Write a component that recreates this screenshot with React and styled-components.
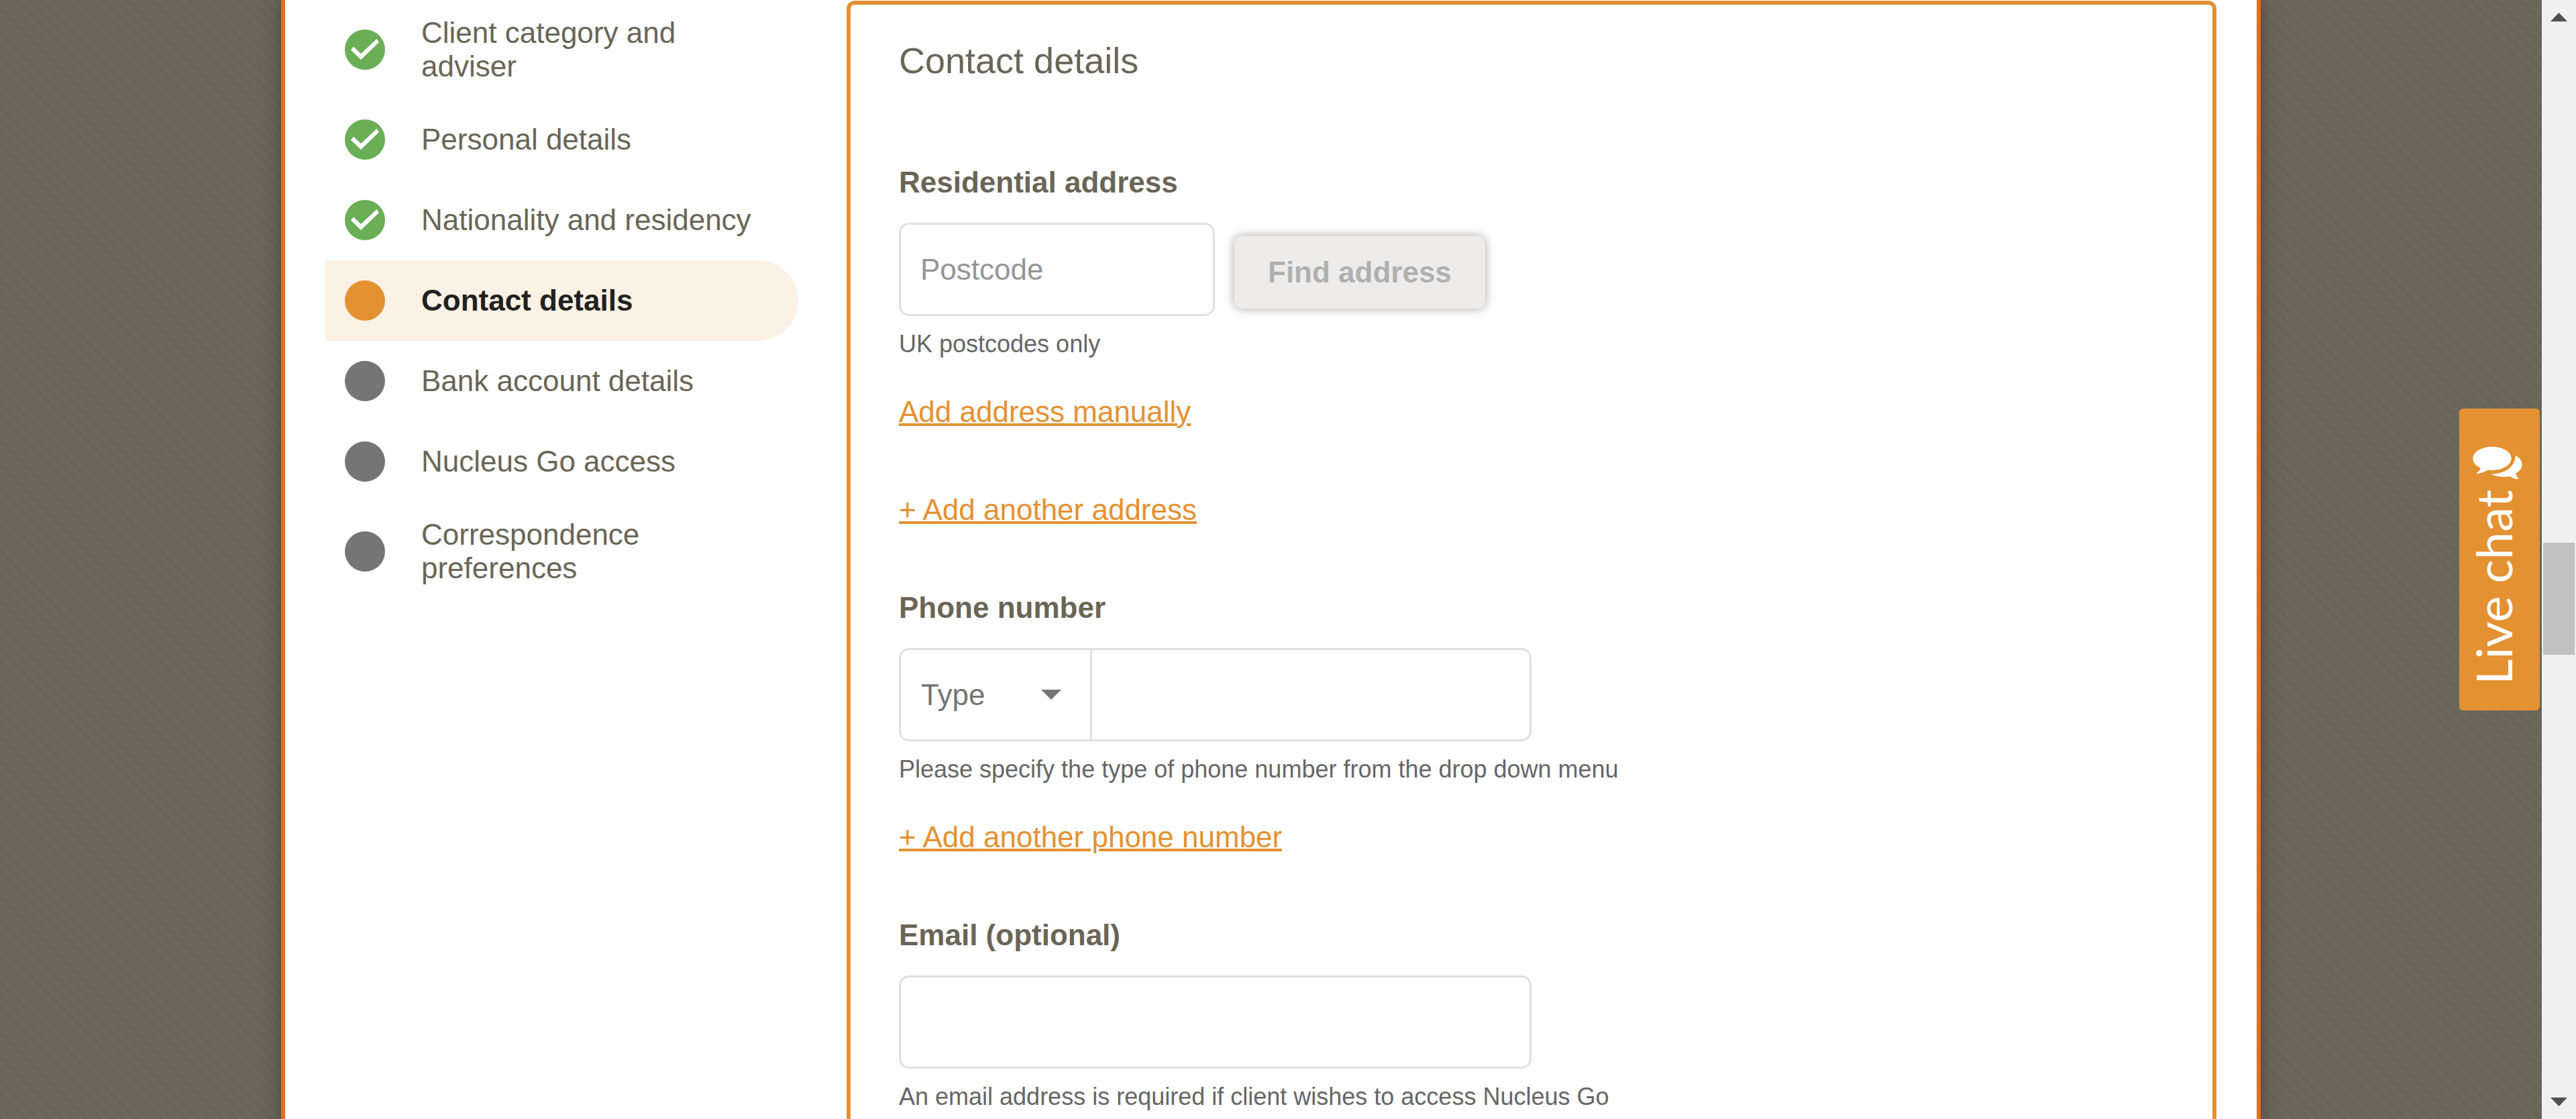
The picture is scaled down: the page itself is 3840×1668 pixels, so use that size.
import React from "react";
import styled, { createGlobalStyle, css } from "styled-components";

const colors = {
  text: "#6a6556",
  strong: "#21211f",
  orange: "#e49132",
  frame: "#e86c1f",
  tint: "#fbf1e4",
  green: "#6aae55",
  grey: "#757575",
  hint: "#666666",
  line: "#e0e0e0",
};

const GlobalStyle = createGlobalStyle`
  *, *::before, *::after { box-sizing: border-box; }
  body {
    margin: 0;
    overflow: hidden;
    font-family: "Liberation Sans", Arial, Helvetica, sans-serif;
    font-size: 44px;
    line-height: 50px;
    color: ${colors.text};
  }
  button, input, select { font: inherit; }
`;

const Screen = styled.div`
  display: flex;
  height: 100vh;
`;

const Viewport = styled.div`
  position: relative;
  flex: 1;
  min-width: 0;
  display: flex;
  justify-content: center;
  align-items: flex-start;
  padding: 0 419px;
  overflow: hidden;
  background: repeating-linear-gradient(
    45deg,
    #676458 0,
    #676458 2px,
    #6c685c 6px,
    #6c685c 9px,
    #676458 13px
  );
`;

const Page = styled.div`
  flex: 1;
  min-width: 0;
  display: flex;
  align-items: flex-start;
  gap: 72px;
  min-height: 100%;
  padding: 0 60px;
  background: #fff;
  border: solid ${colors.frame};
  border-width: 0 6px;
  box-shadow: 0 0 24px rgba(50, 55, 40, 0.6);
`;

const Steps = styled.ol`
  flex: none;
  width: 705px;
  margin: 0;
  padding: 0;
  list-style: none;
`;

const Step = styled.li`
  display: flex;
  align-items: center;
  gap: 54px;
  min-height: 120px;
  padding: 24px 60px 24px 29px;
  border-radius: 0 60px 60px 0;
  ${(p) =>
    p.$current &&
    css`
      background: ${colors.tint};
      color: ${colors.strong};
      font-weight: bold;
    `}
`;

const dotColor = { done: colors.green, current: colors.orange, todo: colors.grey };

const Dot = styled.span`
  flex: none;
  display: grid;
  place-items: center;
  width: 60px;
  height: 60px;
  border-radius: 50%;
  background: ${(p) => dotColor[p.$state]};
`;

const Card = styled.form`
  flex: 1;
  min-width: 0;
  margin-top: 1px;
  padding: 52px 72px 72px;
  border: 6px solid ${colors.orange};
  border-radius: 12px;
`;

const Title = styled.h2`
  margin: 0 0 126px;
  font-size: 54px;
  line-height: 62px;
  font-weight: normal;
`;

const FieldSet = styled.div`
  display: flex;
  flex-direction: column;
  align-items: flex-start;
  margin-bottom: 96px;
`;

const Label = styled.label`
  margin-bottom: 35px;
  font-weight: bold;
`;

const fieldBox = css`
  height: 139px;
  border: 3px solid ${colors.line};
  border-radius: 15px;
  background: #fff;
`;

const TextInput = styled.input`
  ${fieldBox}
  width: ${(p) => p.$width}px;
  padding: 0 29px;
  color: ${colors.text};
  &::placeholder {
    color: #959595;
    opacity: 1;
  }
`;

const InputRow = styled.div`
  display: flex;
  gap: 29px;
`;

const FindButton = styled.button`
  height: 108px;
  margin-top: 20px;
  padding: 0 50px;
  border: 0;
  border-radius: 12px;
  background: #eeecea;
  box-shadow: 0 0 15px rgba(0, 0, 0, 0.35);
  color: #b0b0ae;
  font-weight: bold;
`;

const PhoneBox = styled.div`
  ${fieldBox}
  display: flex;
  width: 943px;
  overflow: hidden;
`;

const SelectWrap = styled.div`
  flex: none;
  display: grid;
  align-items: center;
  width: 285px;
  border-right: 3px solid ${colors.line};
  & > * {
    grid-area: 1 / 1;
  }
`;

const TypeSelect = styled.select`
  width: 100%;
  height: 100%;
  padding: 0 0 0 30px;
  border: 0;
  appearance: none;
  background: transparent;
  color: ${colors.grey};
`;

const Caret = styled.svg`
  justify-self: end;
  margin-right: 43px;
  pointer-events: none;
`;

const PhoneInput = styled.input`
  flex: 1;
  min-width: 0;
  padding: 0 29px;
  border: 0;
  background: transparent;
  color: ${colors.text};
`;

const Hint = styled.p`
  margin: 21px 0 0;
  font-size: 36px;
  line-height: 42px;
  color: ${colors.hint};
`;

const ActionLink = styled.a`
  margin-top: ${(p) => (p.$spaced ? 96 : 55)}px;
  color: ${colors.orange};
  text-decoration-line: underline;
  text-decoration-thickness: 4px;
`;

const ChatButton = styled.button`
  position: absolute;
  right: 3px;
  top: 50%;
  transform: translateY(-50%);
  display: flex;
  flex-direction: column;
  align-items: center;
  gap: 14px;
  width: 120px;
  height: 450px;
  padding: 57px 6px 0 0;
  border: 0;
  border-radius: 6px;
  background: ${colors.orange};
  color: #fff;
`;

const ChatLabel = styled.span`
  margin-right: 12px;
  writing-mode: vertical-rl;
  transform: rotate(180deg);
  font-family: Lato, "Liberation Sans", sans-serif;
  font-size: 74px;
  line-height: 80px;
`;

const ScrollBar = styled.div`
  flex: none;
  display: flex;
  flex-direction: column;
  width: 51px;
  background: #f0f0f0;
`;

const ScrollArrow = styled.button`
  flex: none;
  display: grid;
  place-items: center;
  height: 51px;
  padding: 0;
  border: 0;
  background: transparent;
`;

const ScrollTrack = styled.div`
  flex: 1;
  display: flex;
  flex-direction: column;
  padding: 0 2px;
`;

const ScrollSpace = styled.div`
  flex: ${(p) => p.$share};
`;

const ScrollThumb = styled.div`
  flex: none;
  height: 167px;
  background: #c1c1c1;
`;

const steps = [
  { name: "Client category and adviser", state: "done" },
  { name: "Personal details", state: "done" },
  { name: "Nationality and residency", state: "done" },
  { name: "Contact details", state: "current" },
  { name: "Bank account details", state: "todo" },
  { name: "Nucleus Go access", state: "todo" },
  { name: "Correspondence preferences", state: "todo" },
];

const Tick = () => (
  <svg width="42" height="32" viewBox="0 0 42 32" aria-hidden="true">
    <path d="M4 11.5L15 22L38.5 0L42 5L15 31L0 16.5Z" fill="#fff" />
  </svg>
);

const Bubbles = () => (
  <svg width="74" height="50" viewBox="20 33 222 150" fill="#fff" aria-hidden="true">
    <path d="M107 33C155 33 193 56 193 85S155 138 107 138Q98 138 90 136Q68 150 40 153Q36 151 40 148Q54 140 55 127C33 118 21 103 21 85C21 56 59 33 107 33Z" />
    <path d="M211 73C231 82 241 97 241 112C241 130 230 143 212 151Q214 164 224 174Q226 178 220 178Q200 175 186 166C155 169 122 166 102 155C165 155 211 122 211 73Z" />
  </svg>
);

const Arrow = ({ up }) => (
  <svg width="25" height="13" viewBox="0 0 25 13" fill="#505050" aria-hidden="true">
    <path d={up ? "M0 13L12.5 0L25 13Z" : "M0 0H25L12.5 13Z"} />
  </svg>
);

export default function App() {
  return (
    <Screen>
      <GlobalStyle />
      <Viewport>
        <Page>
          <Steps>
            {steps.map((step) => (
              <Step
                key={step.name}
                $current={step.state === "current"}
                aria-current={step.state === "current" ? "step" : undefined}
              >
                <Dot $state={step.state}>{step.state === "done" && <Tick />}</Dot>
                <span>{step.name}</span>
              </Step>
            ))}
          </Steps>

          <Card onSubmit={(e) => e.preventDefault()}>
            <Title>Contact details</Title>

            <FieldSet>
              <Label htmlFor="postcode">Residential address</Label>
              <InputRow>
                <TextInput id="postcode" $width={471} placeholder="Postcode" />
                <FindButton type="button" disabled>
                  Find address
                </FindButton>
              </InputRow>
              <Hint>UK postcodes only</Hint>
              <ActionLink href="#manual">Add address manually</ActionLink>
              <ActionLink href="#address" $spaced>
                + Add another address
              </ActionLink>
            </FieldSet>

            <FieldSet>
              <Label htmlFor="phone">Phone number</Label>
              <PhoneBox>
                <SelectWrap>
                  <TypeSelect aria-label="Phone number type" defaultValue="">
                    <option value="">Type</option>
                  </TypeSelect>
                  <Caret width="30" height="15" viewBox="0 0 30 15" aria-hidden="true">
                    <path d="M0 0H30L15 15Z" fill={colors.grey} />
                  </Caret>
                </SelectWrap>
                <PhoneInput id="phone" type="tel" />
              </PhoneBox>
              <Hint>Please specify the type of phone number from the drop down menu</Hint>
              <ActionLink href="#phone">+ Add another phone number</ActionLink>
            </FieldSet>

            <FieldSet>
              <Label htmlFor="email">Email (optional)</Label>
              <TextInput id="email" type="email" $width={943} />
              <Hint>An email address is required if client wishes to access Nucleus Go</Hint>
            </FieldSet>
          </Card>
        </Page>

        <ChatButton type="button">
          <Bubbles />
          <ChatLabel>Live chat</ChatLabel>
        </ChatButton>
      </Viewport>

      <ScrollBar>
        <ScrollArrow type="button" aria-label="Scroll up">
          <Arrow up />
        </ScrollArrow>
        <ScrollTrack>
          <ScrollSpace $share={758} />
          <ScrollThumb />
          <ScrollSpace $share={641} />
        </ScrollTrack>
        <ScrollArrow type="button" aria-label="Scroll down">
          <Arrow />
        </ScrollArrow>
      </ScrollBar>
    </Screen>
  );
}
